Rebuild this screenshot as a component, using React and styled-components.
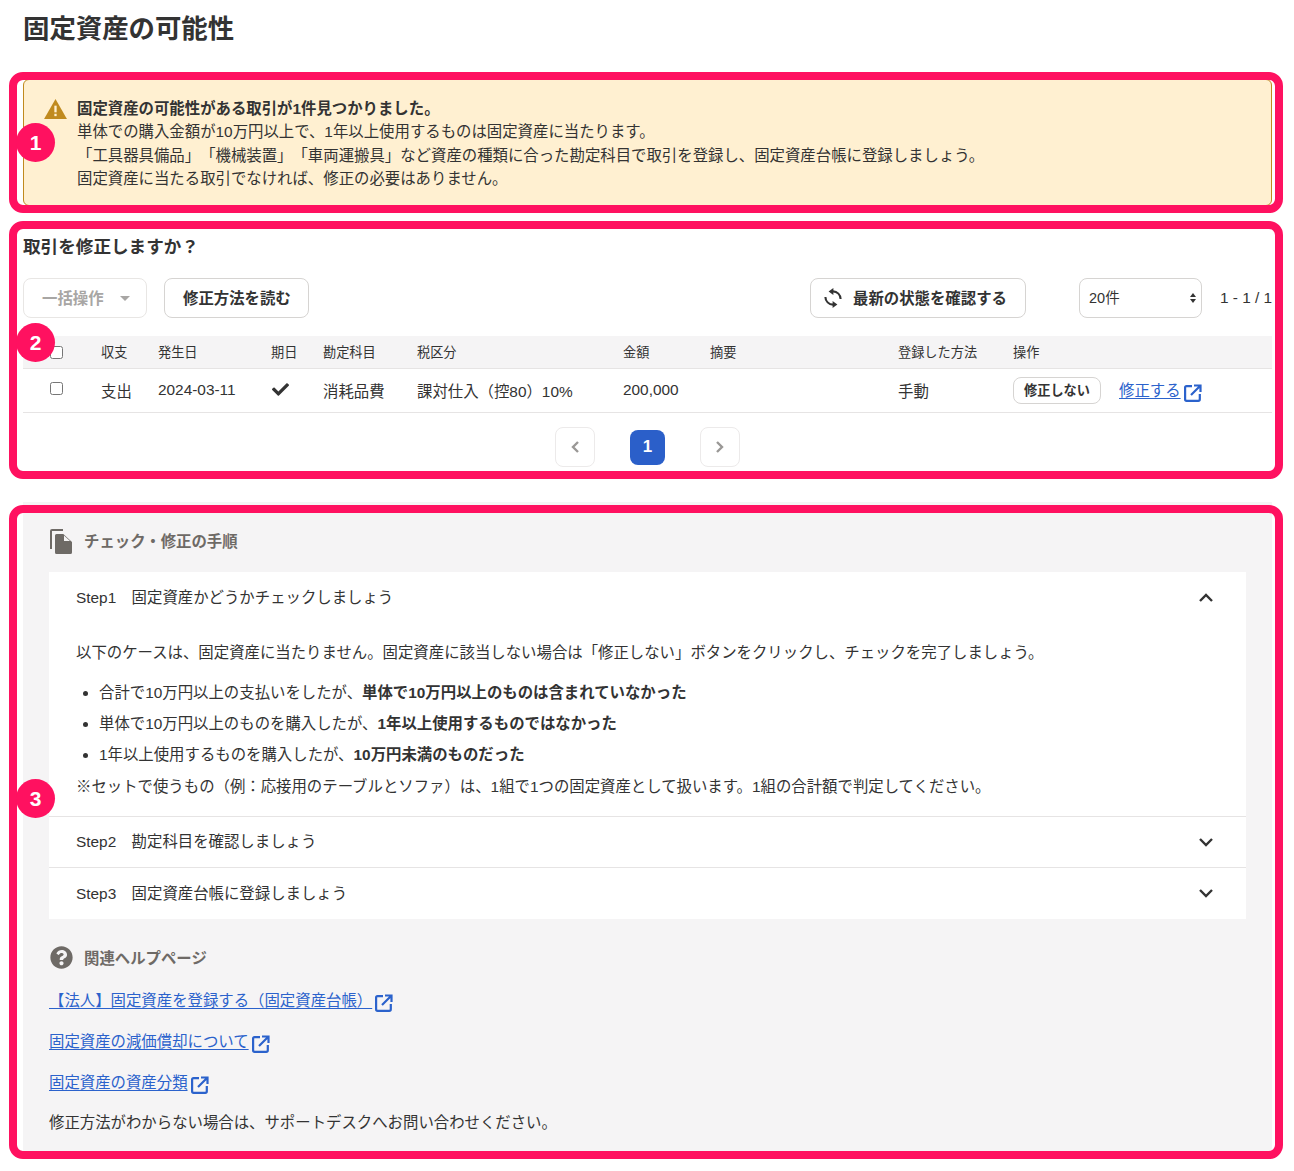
import React from "react";
import styled, { createGlobalStyle } from "styled-components";
import { FaCheck, FaQuestionCircle } from "react-icons/fa";

const Global = createGlobalStyle`
  html, body { margin: 0; background: #fff; }
  body {
    font-family: "Liberation Sans", "Noto Sans CJK JP", sans-serif;
    font-size: 15.4px;
    color: #333;
    text-spacing-trim: space-all;
  }
`;

const Page = styled.div`
  width: 1294px;
  height: 1171px;
  box-sizing: border-box;
  padding: 0 22px 0 23px;
  overflow: hidden;
`;
const Title = styled.h1`
  margin: 0;
  height: 79px;
  padding-top: 12px;
  box-sizing: border-box;
  font-size: 26.4px;
  line-height: 34px;
  font-weight: 700;
`;
const Section = styled.section`
  position: relative;
`;
const Frame = styled.div`
  position: absolute;
  top: ${(p) => p.$top}px;
  bottom: ${(p) => p.$bottom}px;
  left: -14px;
  right: -11px;
  border: 8px solid #ff1160;
  border-radius: 14px;
  pointer-events: none;
  z-index: 2;
`;
const Badge = styled.div`
  position: absolute;
  left: -7px;
  top: ${(p) => p.$top}px;
  width: 39px;
  height: 39px;
  border-radius: 50%;
  background: #ff1160;
  color: #fff;
  font-size: 21px;
  font-weight: 700;
  display: flex;
  align-items: center;
  justify-content: center;
  z-index: 3;
`;

const Alert = styled.div`
  height: 127px;
  box-sizing: border-box;
  padding: 17px 20px 0;
  display: flex;
  gap: 10px;
  background: #fff0d1;
  border: 1px solid #c08a1e;
  border-radius: 6px;
`;
const AlertIcon = styled.svg`
  width: 23px;
  height: 20px;
  flex: none;
  margin-top: 2px;
`;
const AlertText = styled.div`
  line-height: 23.4px;
`;
const AlertHead = styled.div`
  font-weight: 700;
`;

const SubTitle = styled.h2`
  margin: 0;
  padding-top: 29px;
  height: 72px;
  box-sizing: border-box;
  font-size: 17.6px;
  line-height: 24px;
  font-weight: 700;
`;
const Toolbar = styled.div`
  display: flex;
  align-items: center;
  height: 40px;
`;
const Btn = styled.button`
  height: 40px;
  box-sizing: border-box;
  padding: 0 18px 3px;
  display: inline-flex;
  align-items: center;
  flex: none;
  white-space: nowrap;
  background: #fff;
  border: 1px solid ${(p) => (p.disabled ? "#e8e6e4" : "#d6d4d2")};
  border-radius: 8px;
  font: inherit;
  font-weight: 700;
  color: ${(p) => (p.disabled ? "#a8a6a4" : "#333")};
`;
const BulkBtn = styled(Btn)`
  width: 124px;
  margin-right: 17px;
`;
const Caret = styled.span`
  width: 0;
  height: 0;
  margin: 3px 0 0 16px;
  border-left: 5px solid transparent;
  border-right: 5px solid transparent;
  border-top: 5px solid #a8a6a4;
`;
const ReadBtn = styled(Btn)`
  width: 145px;
  margin-right: 501px;
`;
const SyncBtn = styled(Btn)`
  width: 216px;
  margin-right: 53px;
  padding: 0 0 3px 13px;
  gap: 11px;
`;
const SyncIcon = styled.svg`
  width: 18px;
  height: 20px;
  margin-top: 3px;
  flex: none;
`;
const SelectBox = styled.div`
  position: relative;
  flex: none;
  width: 123px;
  height: 40px;
  margin-right: 18px;
`;
const SizeSelect = styled.select`
  appearance: none;
  width: 100%;
  height: 100%;
  box-sizing: border-box;
  padding: 0 4px 0 9px;
  background: #fff;
  border: 1px solid #d6d4d2;
  border-radius: 8px;
  font: inherit;
  font-size: 14.5px;
  color: #333;
`;
const SelectArrows = styled.svg`
  position: absolute;
  right: 6px;
  top: 15px;
  width: 6px;
  height: 10px;
  pointer-events: none;
`;
const Count = styled.span`
  white-space: nowrap;
  font-size: 15.4px;
`;

const Table = styled.table`
  width: 1249px;
  margin-top: 18px;
  border-collapse: collapse;
  table-layout: fixed;
`;
const Th = styled.th`
  height: 30px;
  padding: 0 0 2px;
  background: #f5f4f5;
  border-bottom: 1px solid #e6e4e4;
  font-size: 13.2px;
  font-weight: 400;
  text-align: left;
`;
const CheckHead = styled(Th)`
  text-align: left;
  padding: 0 0 0 27px;
  height: 32px;
`;
const Td = styled.td`
  height: 41px;
  padding: 0 0 2px;
  border-bottom: 1px solid #e6e4e4;
  text-align: left;
  font-size: 15.4px;
  white-space: nowrap;
`;
const CheckCell = styled(Td)`
  height: 43px;
  padding: 0 0 0 27px;
`;
const ActionCell = styled(Td)`
  height: 43px;
  padding: 0;
`;
const Check = styled.input`
  display: block;
  margin: 0;
  width: 13px;
  height: 13px;
  position: relative;
  top: ${(p) => p.$up}px;
`;
const Tick = styled(FaCheck)`
  display: block;
  width: 17px;
  height: 17px;
  margin-left: 1px;
  color: #333;
`;
const ActionWrap = styled.div`
  display: flex;
  align-items: center;
  gap: 18px;
`;
const SkipBtn = styled.button`
  width: 88px;
  height: 27px;
  box-sizing: border-box;
  padding: 0 0 2px;
  background: #fff;
  border: 1px solid #d6d4d2;
  border-radius: 8px;
  font: inherit;
  font-size: 13.2px;
  font-weight: 700;
  color: #333;
`;
const LinkLine = styled.a`
  display: inline-flex;
  align-items: flex-start;
  color: #2b62cc;
  text-decoration: none;
`;
const LinkText = styled.span`
  text-decoration: underline;
  text-underline-offset: 2px;
  line-height: 22px;
  white-space: nowrap;
`;
const ExtIcon = styled.svg`
  width: 18px;
  height: 18px;
  flex: none;
  margin: 4px 0 0 3px;
`;

const Pager = styled.nav`
  display: flex;
  justify-content: center;
  align-items: center;
  gap: 35px;
  height: 66px;
  padding-top: 2px;
  box-sizing: border-box;
`;
const PageArrow = styled.button`
  width: 40px;
  height: 40px;
  padding: 0;
  display: flex;
  align-items: center;
  justify-content: center;
  background: #fff;
  border: 1px solid #eceaea;
  border-radius: 8px;
`;
const PageCurrent = styled.button`
  width: 35px;
  height: 35px;
  padding: 0;
  background: #2b5fc9;
  border: 0;
  border-radius: 8px;
  color: #fff;
  font: inherit;
  font-weight: 700;
  font-size: 17px;
`;

const Guide = styled.section`
  position: relative;
  margin-top: 23px;
  height: 649px;
  box-sizing: border-box;
  padding: 0 26px;
  background: #f5f4f5;
`;
const GuideHead = styled.div`
  display: flex;
  align-items: center;
  gap: 11px;
  height: 70px;
  padding-top: 6px;
  box-sizing: border-box;
  font-weight: 700;
  color: #6e6a66;
`;
const DocIcon = styled.svg`
  width: 23px;
  height: 25px;
  flex: none;
  margin: 2px 0 0 1px;
`;
const Accordion = styled.div`
  background: #fff;
`;
const AccHead = styled.div`
  display: flex;
  align-items: center;
  justify-content: space-between;
  height: ${(p) => p.$h}px;
  padding: 0 27px ${(p) => p.$pb || 0}px;
  box-sizing: border-box;
  border-top: ${(p) => (p.$line ? "1px solid #e6e4e4" : "none")};
`;
const AccLabel = styled.span`
  margin-bottom: ${(p) => p.$lift}px;
`;
const Chevron = styled.svg`
  width: 16px;
  height: 10px;
  margin-right: 5px;
  flex: none;
`;
const AccBody = styled.div`
  padding: 17px 27px 0;
  height: 193px;
  box-sizing: border-box;
`;
const Para = styled.p`
  margin: 0;
  line-height: 26px;
`;
const Bullets = styled.ul`
  margin: 11px 0 4px;
  padding: 0 0 0 23px;
`;
const Bullet = styled.li`
  line-height: 31px;
`;
const Related = styled.div`
  display: flex;
  align-items: center;
  gap: 11px;
  height: 40px;
  margin-top: 18px;
  margin-bottom: 10px;
  font-weight: 700;
  color: #6e6a66;
`;
const HelpIcon = styled(FaQuestionCircle)`
  width: 23px;
  height: 23px;
  margin-left: 1px;
  color: #6e6a66;
`;
const RelatedItem = styled.div`
  height: 41px;
  padding-top: 3px;
  box-sizing: border-box;
  display: flex;
`;
const Support = styled.p`
  margin: 0;
  line-height: 26px;
`;

const External = () => (
  <ExtIcon viewBox="0 0 18 18" fill="none" stroke="#2b62cc" strokeWidth="2.2">
    <path d="M8 2.1H2.6a1.5 1.5 0 0 0-1.5 1.5v11.7a1.5 1.5 0 0 0 1.5 1.5h11.7a1.5 1.5 0 0 0 1.5-1.5V10" />
    <path d="M7 11 16 2M10 1.5h6.5V8" />
  </ExtIcon>
);

const Down = () => (
  <Chevron viewBox="0 0 16 10" fill="none" stroke="#333" strokeWidth="2.4">
    <path d="M2 2l6 6 6-6" />
  </Chevron>
);

export default function App() {
  return (
    <Page>
      <Global />
      <Title>固定資産の可能性</Title>

      <Section>
        <Frame $top={-7} $bottom={-7} />
        <Badge $top={44}>1</Badge>
        <Alert>
          <AlertIcon viewBox="0 0 24 21">
            <path d="M12 0 24 21H0Z" fill="#c08a1e" />
            <rect x="10.8" y="7" width="2.4" height="7" fill="#fff0d1" />
            <rect x="10.8" y="15.5" width="2.4" height="2.5" fill="#fff0d1" />
          </AlertIcon>
          <AlertText>
            <AlertHead>固定資産の可能性がある取引が1件見つかりました。</AlertHead>
            <div>単体での購入金額が10万円以上で、1年以上使用するものは固定資産に当たります。</div>
            <div>「工具器具備品」「機械装置」「車両運搬具」など資産の種類に合った勘定科目で取引を登録し、固定資産台帳に登録しましょう。</div>
            <div>固定資産に当たる取引でなければ、修正の必要はありません。</div>
          </AlertText>
        </Alert>
      </Section>

      <Section>
        <Frame $top={15} $bottom={0} />
        <Badge $top={117}>2</Badge>
        <SubTitle>取引を修正しますか？</SubTitle>
        <Toolbar>
          <BulkBtn disabled>
            一括操作<Caret />
          </BulkBtn>
          <ReadBtn>修正方法を読む</ReadBtn>
          <SyncBtn>
            <SyncIcon viewBox="0 0 18 20" fill="none" stroke="#333" strokeWidth="2.1">
              <path d="M16.6 11A7.6 7.6 0 0 0 9 3.4" />
              <path d="M1.4 9A7.6 7.6 0 0 0 9 16.6" />
              <path d="M4.6 3.4 9.4 0v7z" fill="#333" stroke="none" />
              <path d="M13.4 16.6 8.6 13v7z" fill="#333" stroke="none" />
            </SyncIcon>
            最新の状態を確認する
          </SyncBtn>
          <SelectBox>
            <SizeSelect defaultValue="20">
              <option value="20">20件</option>
              <option value="50">50件</option>
            </SizeSelect>
            <SelectArrows viewBox="0 0 6 10">
              <path d="M3 0l3 4H0zM3 10 0 6h6z" fill="#333" />
            </SelectArrows>
          </SelectBox>
          <Count>1 - 1 / 1</Count>
        </Toolbar>
        <Table>
          <colgroup>
            <col width="78" />
            <col width="57" />
            <col width="113" />
            <col width="52" />
            <col width="94" />
            <col width="206" />
            <col width="87" />
            <col width="188" />
            <col width="115" />
            <col width="259" />
          </colgroup>
          <thead>
            <tr>
              <CheckHead><Check type="checkbox" $up={0} /></CheckHead>
              <Th>収支</Th>
              <Th>発生日</Th>
              <Th>期日</Th>
              <Th>勘定科目</Th>
              <Th>税区分</Th>
              <Th>金額</Th>
              <Th>摘要</Th>
              <Th>登録した方法</Th>
              <Th>操作</Th>
            </tr>
          </thead>
          <tbody>
            <tr>
              <CheckCell><Check type="checkbox" $up={-2} /></CheckCell>
              <Td>支出</Td>
              <Td>2024-03-11</Td>
              <Td><Tick /></Td>
              <Td>消耗品費</Td>
              <Td>課対仕入（控80）10%</Td>
              <Td>200,000</Td>
              <Td></Td>
              <Td>手動</Td>
              <ActionCell>
                <ActionWrap>
                  <SkipBtn>修正しない</SkipBtn>
                  <LinkLine href="#">
                    <LinkText>修正する</LinkText>
                    <External />
                  </LinkLine>
                </ActionWrap>
              </ActionCell>
            </tr>
          </tbody>
        </Table>
        <Pager>
          <PageArrow>
            <svg width="10" height="14" viewBox="0 0 10 14" fill="none" stroke="#9a9896" strokeWidth="2.4"><path d="M8 2 3 7l5 5" /></svg>
          </PageArrow>
          <PageCurrent>1</PageCurrent>
          <PageArrow>
            <svg width="10" height="14" viewBox="0 0 10 14" fill="none" stroke="#9a9896" strokeWidth="2.4"><path d="M2 2l5 5-5 5" /></svg>
          </PageArrow>
        </Pager>
      </Section>

      <Guide>
        <Frame $top={3} $bottom={-8} />
        <Badge $top={277}>3</Badge>
        <GuideHead>
          <DocIcon viewBox="0 0 23 25">
            <path d="M0 2a2 2 0 0 1 2-2h11v2H2v18H0z" fill="#6e6a66" />
            <path d="M6.5 5h6.8L22 13v10.4a1.6 1.6 0 0 1-1.6 1.6H6.5A1.6 1.6 0 0 1 5 23.4V6.5A1.5 1.5 0 0 1 6.5 5z" fill="#6e6a66" />
            <path d="M14 6.6V12h6z" fill="#f5f4f5" />
          </DocIcon>
          チェック・修正の手順
        </GuideHead>
        <Accordion>
          <AccHead $h={51}>
            <AccLabel $lift={3}>Step1　固定資産かどうかチェックしましょう</AccLabel>
            <Chevron viewBox="0 0 16 10" fill="none" stroke="#333" strokeWidth="2.4">
              <path d="M2 8l6-6 6 6" />
            </Chevron>
          </AccHead>
          <AccBody>
            <Para>以下のケースは、固定資産に当たりません。固定資産に該当しない場合は「修正しない」ボタンをクリックし、チェックを完了しましょう。</Para>
            <Bullets>
              <Bullet>合計で10万円以上の支払いをしたが、<b>単体で10万円以上のものは含まれていなかった</b></Bullet>
              <Bullet>単体で10万円以上のものを購入したが、<b>1年以上使用するものではなかった</b></Bullet>
              <Bullet>1年以上使用するものを購入したが、<b>10万円未満のものだった</b></Bullet>
            </Bullets>
            <Para>※セットで使うもの（例：応接用のテーブルとソファ）は、1組で1つの固定資産として扱います。1組の合計額で判定してください。</Para>
          </AccBody>
          <AccHead $h={51} $line>
            <AccLabel $lift={5}>Step2　勘定科目を確認しましょう</AccLabel>
            <Down />
          </AccHead>
          <AccHead $h={52} $line $pb={2}>
            <AccLabel $lift={1}>Step3　固定資産台帳に登録しましょう</AccLabel>
            <Down />
          </AccHead>
        </Accordion>
        <Related>
          <HelpIcon />
          関連ヘルプページ
        </Related>
        <RelatedItem>
          <LinkLine href="#"><LinkText>【法人】固定資産を登録する（固定資産台帳）</LinkText><External /></LinkLine>
        </RelatedItem>
        <RelatedItem>
          <LinkLine href="#"><LinkText>固定資産の減価償却について</LinkText><External /></LinkLine>
        </RelatedItem>
        <RelatedItem>
          <LinkLine href="#"><LinkText>固定資産の資産分類</LinkText><External /></LinkLine>
        </RelatedItem>
        <Support>修正方法がわからない場合は、サポートデスクへお問い合わせください。</Support>
      </Guide>
    </Page>
  );
}
